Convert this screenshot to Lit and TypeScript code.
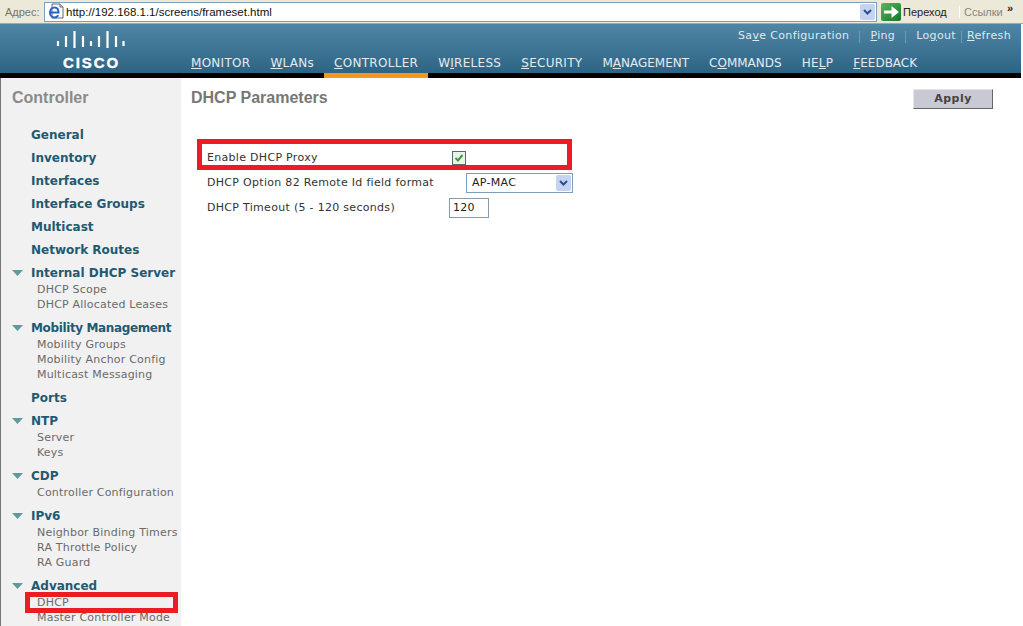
import { LitElement, html, css, svg } from "lit";
import { customElement } from "lit/decorators.js";
import { classMap } from "lit/directives/class-map.js";

const tri = html`<svg class="tri" width="11" height="6" viewBox="0 0 11 6"><path d="M0 0h11L5.5 6z" fill="#5f9a9c"/></svg>`;

type Group = { title: string; subs: string[]; narrow?: boolean };
const plain = ["General", "Inventory", "Interfaces", "Interface Groups", "Multicast", "Network Routes"];

const go = svg`<defs><linearGradient id="g" x1="0" y1="0" x2="1" y2="1"><stop offset="0" stop-color="#54b85c"/><stop offset="1" stop-color="#15762a"/></linearGradient></defs><rect width="20" height="18" rx="2" fill="url(#g)"/><path d="M3 7.500h7.500V3L18 9l-7.500 6v-4.500H3z" fill="#fff"/>`;

const bars: [number, number, number][] = [
  [2, 10, 15], [10, 5, 16], [18.5, 0, 17], [27, 5, 16], [35, 10, 15], [43, 5, 16], [51.5, 0, 17], [60, 5, 16], [67.5, 10, 15],
];

@customElement("app-root")
export class AppRoot extends LitElement {
  static styles = css`
    :host { display: block; width: 1023px; height: 626px; overflow: hidden; position: relative; background: #fff; font-family: "DejaVu Sans", Verdana, sans-serif; }
    .bar { height: 24px; box-sizing: border-box; background: #ece9d8; display: flex; align-items: center; font-family: "Liberation Sans", Arial, sans-serif; font-size: 11px; color: #222; border-bottom: 1px solid #a9a79c; }
    .addr-label { width: 44px; padding-left: 5px; box-sizing: border-box; color: #77766c; font-size: 11px; }
    .addr { width: 833px; height: 20px; box-sizing: border-box; border: 1px solid #7f9db9; background: #fff; display: flex; align-items: center; gap: 1px; padding-left: 3px; font-size: 11.5px; color: #111; }
    .addr span { flex: 1; }
    .drop { width: 15px; height: 16px; background: #c5d3f3; border-radius: 2px; display: flex; align-items: center; justify-content: center; margin-right: 1px; flex: none; }
    .go { display: flex; align-items: center; gap: 2px; margin-left: 4px; width: 78px; flex: none; }
    .links { color: #88877c; width: 47px; box-sizing: border-box; border-left: 1px solid #fff; padding-left: 4px; flex: none; }
    .more { font-size: 11px; font-weight: bold; margin: -8px 0 0 1px; }
    header { height: 54px; width: 1021px; box-sizing: border-box; background: linear-gradient(#4f86a6, #2d6484); border-bottom: 5px solid #000; position: relative; display: flex; color: #e9eef2; }
    .logo { width: 191px; box-sizing: border-box; padding: 7px 0 0 56px; flex: none; }
    .logo svg { display: block; }
    .cisco { font: bold 15px/15px "Liberation Sans", Arial, sans-serif; letter-spacing: 1.9px; color: #fff; -webkit-text-stroke: 0.4px #fff; margin-top: 7px; padding-left: 7px; }
    .nav { display: flex; flex: 1; flex-direction: column; }
    .top { display: flex; justify-content: flex-end; padding: 5px 10px 0 0; font-size: 11px; height: 24px; box-sizing: border-box; letter-spacing: 0.35px; align-items: flex-start; color: #dfe8ee; }
    .top i { font-style: normal; width: 1px; height: 12px; background: #6b9ab6; margin: 2px 10px 0; }
    .top i.near { margin: 2px 5px 0; }
    .menu { display: flex; font-size: 12px; line-height: 15px; margin-top: 8px; position: relative; color: #e4ebf0; letter-spacing: 0.28px; }
    .menu span { margin-right: 20px; }
    .menu .tight { letter-spacing: 0; }
    .menu .on { position: relative; }
    .menu .on::after { content: ""; position: absolute; left: -10px; right: -10px; top: 17px; height: 5px; background: #f7941d; }
    .main { display: flex; height: 548px; }
    aside { width: 181px; flex: none; box-sizing: border-box; background: #f1f1f1; border-left: 1px solid #777; padding: 11px 0 0 11px; overflow: hidden; }
    aside h2 { margin: 0 0 17px; font: bold 16px/18px "Liberation Sans", Arial, sans-serif; color: #8a8a8a; }
    .item, .ghead { font: bold 12px/23px "DejaVu Sans", Verdana, sans-serif; color: #1f5a72; height: 23px; white-space: nowrap; }
    .item { padding-left: 19px; }
    .ghead { display: flex; align-items: center; gap: 8px; }
    .ghead.narrow { letter-spacing: -0.37px; }
    .tri { flex: none; margin-bottom: 2px; }
    .sub { font-size: 11px; line-height: 15px; height: 15px; color: #6a6a6a; padding-left: 25px; white-space: nowrap; letter-spacing: 0.2px; }
    .subs { margin-top: -3px; margin-bottom: 5px; }
    section { flex: 1; position: relative; padding: 11px 30px 0 10px; }
    .titlerow { display: flex; justify-content: space-between; align-items: flex-start; }
    h1 { margin: 0; font: bold 16px/18px "Liberation Sans", Arial, sans-serif; color: #777; }
    .apply { width: 80px; height: 20px; box-sizing: border-box; background: #c9c9d3; border: 1px solid; border-color: #e4e4ea #666 #666 #e4e4ea; font: bold 11px/18px "DejaVu Sans", Verdana, sans-serif; color: #444; text-align: center; letter-spacing: 0.5px; }
    .form { display: grid; grid-template-columns: 242px 1fr; margin: 36px 0 0 16px; font-size: 11px; color: #333; letter-spacing: 0.3px; }
    .form > div { height: 25px; display: flex; align-items: center; }
    .check { width: 12px; height: 12px; border: 1px solid #4f6f68; background: #edf2ea; margin-left: 3px; display: flex; }
    .select { width: 107px; height: 20px; box-sizing: border-box; border: 1px solid #7f9db9; margin-left: 17px; display: flex; align-items: center; justify-content: space-between; padding: 0 1px 0 5px; background: #fff; color: #222; }
    .select .drop { margin: 0; }
    .input { width: 40px; height: 20px; box-sizing: border-box; border: 1px solid #8a9ba8; display: flex; align-items: center; padding-left: 3px; color: #222; }
    .mark { position: absolute; border: 5px solid #ed1c24; box-sizing: border-box; }
    .m1 { left: 197px; top: 139px; width: 375px; height: 31px; }
    .m2 { left: 25px; top: 592px; width: 153px; height: 21px; }
  `;

  private u(t: string, i: number) {
    return html`${t.slice(0, i)}<u>${t[i]}</u>${t.slice(i + 1)}`;
  }

  render() {
    const chev = html`<svg width="9" height="6" viewBox="0 0 9 6"><path d="M1 1l3.500 3.500L8 1" fill="none" stroke="#2d4f88" stroke-width="2"/></svg>`;
    const groups: Group[] = [
      { title: "Internal DHCP Server", subs: ["DHCP Scope", "DHCP Allocated Leases"] },
      { title: "Mobility Management", subs: ["Mobility Groups", "Mobility Anchor Config", "Multicast Messaging"], narrow: true },
    ];
    const groups2: Group[] = [
      { title: "NTP", subs: ["Server", "Keys"] },
      { title: "CDP", subs: ["Controller Configuration"] },
      { title: "IPv6", subs: ["Neighbor Binding Timers", "RA Throttle Policy", "RA Guard"] },
      { title: "Advanced", subs: ["DHCP", "Master Controller Mode"] },
    ];
    const renderGroup = (g: Group) => html`
      <div class=${classMap({ ghead: true, narrow: !!g.narrow })}>${tri}<span>${g.title}</span></div>
      <div class="subs">${g.subs.map((s) => html`<div class="sub">${s}</div>`)}</div>`;
    return html`
      <div class="bar">
        <div class="addr-label">Адрес:</div>
        <div class="addr">
          <svg width="17" height="17" viewBox="0 0 17 17"><path d="M4 1h8l3 3v11H4z" fill="#fff" stroke="#667"/><path d="M12 1v3h3" fill="#dde" stroke="#667"/><path d="M2.500 9.500h8c0-3.500-1.500-5-4-5s-4.500 2-4.500 5 2 5 4.500 5c1.700 0 3-.8 3.800-2.200" fill="none" stroke="#2a62c8" stroke-width="2"/></svg>
          <span>http://192.168.1.1/screens/frameset.html</span>
          <div class="drop">${chev}</div>
        </div>
        <div class="go"><svg width="20" height="18" viewBox="0 0 20 18">${go}</svg><span>Переход</span></div>
        <div class="links">Ссылки</div>
        <div class="more">»</div>
      </div>
      <header>
        <div class="logo">
          <svg width="70" height="17" viewBox="0 0 70 17"><g stroke="#fff" stroke-width="2.2">${bars.map(([x, a, b]) => svg`<path d="M${x} ${a}V${b}"/>`)}</g></svg>
          <div class="cisco">CISCO</div>
        </div>
        <div class="nav">
          <div class="top">
            <span>Sa<u>v</u>e Configuration</span><i></i><span><u>P</u>ing</span><i></i><span>Lo<u>g</u>out</span><i class="near"></i><span><u>R</u>efresh</span>
          </div>
          <div class="menu">
            <span>${this.u("MONITOR", 0)}</span>
            <span>${this.u("WLANs", 0)}</span>
            <span class="on">${this.u("CONTROLLER", 0)}</span>
            <span>${this.u("WIRELESS", 1)}</span>
            <span>${this.u("SECURITY", 0)}</span>
            <span class="tight">${this.u("MANAGEMENT", 1)}</span>
            <span class="tight">${this.u("COMMANDS", 1)}</span>
            <span>${this.u("HELP", 2)}</span>
            <span class="tight">${this.u("FEEDBACK", 0)}</span>
          </div>
        </div>
      </header>
      <div class="main">
        <aside>
          <h2>Controller</h2>
          ${plain.map((p) => html`<div class="item">${p}</div>`)}
          ${groups.map(renderGroup)}
          <div class="item">Ports</div>
          ${groups2.map(renderGroup)}
        </aside>
        <section>
          <div class="titlerow"><h1>DHCP Parameters</h1><div class="apply">Apply</div></div>
          <div class="form">
            <div>Enable DHCP Proxy</div>
            <div><span class="check"><svg width="12" height="12" viewBox="0 0 12 12"><path d="M2.500 6l2.500 2.500L9.500 3" fill="none" stroke="#3a9a48" stroke-width="2"/></svg></span></div>
            <div>DHCP Option 82 Remote Id field format</div>
            <div><span class="select">AP-MAC<span class="drop">${chev}</span></span></div>
            <div>DHCP Timeout (5 - 120 seconds)</div>
            <div><span class="input">120</span></div>
          </div>
        </section>
      </div>
      <div class="mark m1"></div>
      <div class="mark m2"></div>
    `;
  }
}
